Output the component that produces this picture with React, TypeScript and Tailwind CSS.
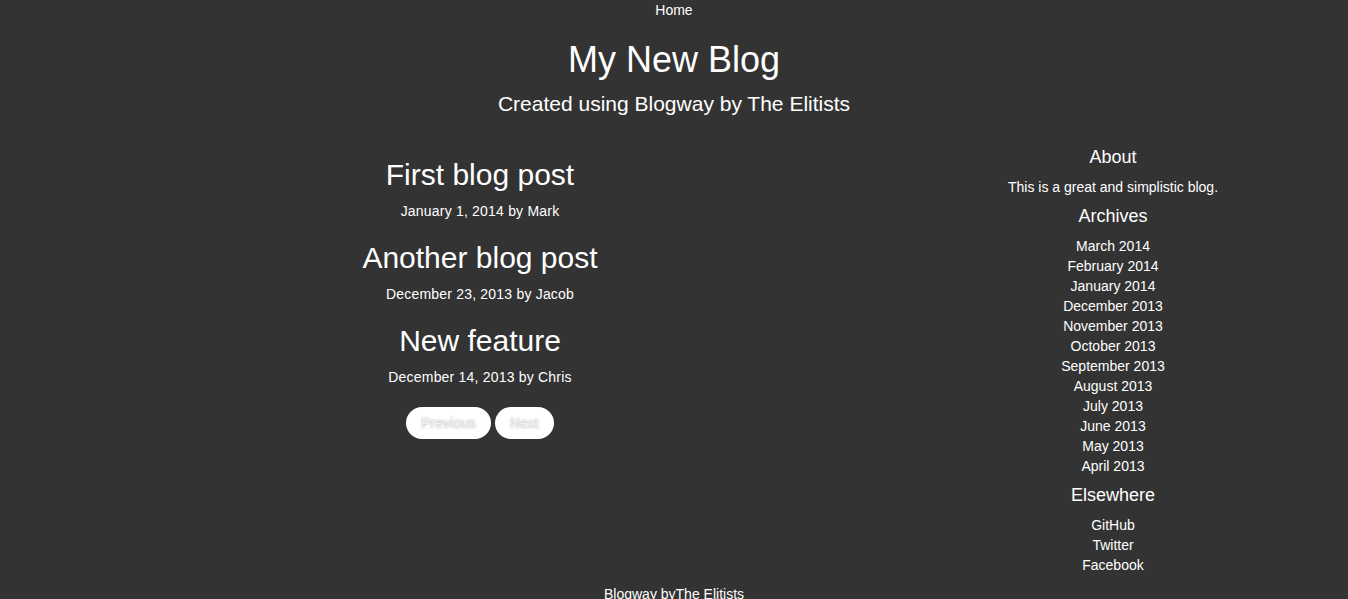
import * as React from "react";

type Post = {
  title: string;
  date: string;
  author: string;
};

const posts: Post[] = [
  { title: "First blog post", date: "January 1, 2014", author: "Mark" },
  { title: "Another blog post", date: "December 23, 2013", author: "Jacob" },
  { title: "New feature", date: "December 14, 2013", author: "Chris" },
];

const archives = [
  "March 2014",
  "February 2014",
  "January 2014",
  "December 2013",
  "November 2013",
  "October 2013",
  "September 2013",
  "August 2013",
  "July 2013",
  "June 2013",
  "May 2013",
  "April 2013",
];

const elsewhere = ["GitHub", "Twitter", "Facebook"];

export default function App() {
  return (
    <div className="min-h-screen bg-[#333333] text-white font-['Liberation_Sans',Arial,sans-serif] text-center">
      {/* Nav */}
      <nav className="text-[14px] leading-[20px]">
        <a href="#">Home</a>
      </nav>

      {/* Header */}
      <header>
        <h1 className="mt-[18px] text-[36px] leading-[44px] font-normal">
          My New Blog
        </h1>
        <h2 className="mt-[10px] text-[21px] leading-[24px] font-normal">
          Created using Blogway by The Elitists
        </h2>
      </header>

      <div className="mt-[29px] flex">
        {/* Posts */}
        <main className="w-[960px] pt-[12px]">
          {posts.map((post, i) => (
            <article key={post.title} className={i > 0 ? "mt-[19px]" : ""}>
              <h3 className="text-[30px] leading-[36px] font-normal">
                <a href="#">{post.title}</a>
              </h3>
              <p className="mt-[8px] text-[14px] leading-[20px] tracking-[0.2px]">
                {post.date} by {post.author}
              </p>
            </article>
          ))}

          <div className="mt-[20px] flex justify-center gap-[4px]">
            <button className="h-[32px] w-[85px] rounded-full bg-white text-[14px] text-[#f4f4f4] [text-shadow:0_0_2px_#9a9a9a]">
              Previous
            </button>
            <button className="h-[32px] w-[59px] rounded-full bg-white text-[14px] text-[#f4f4f4] [text-shadow:0_0_2px_#9a9a9a]">
              Next
            </button>
          </div>
        </main>

        {/* Sidebar */}
        <aside className="w-[306px] text-[14px] leading-[20px]">
          <h4 className="text-[18px] leading-[24px] font-normal">About</h4>
          <p className="mt-[8px]">This is a great and simplistic blog.</p>

          <h4 className="mt-[7px] text-[18px] leading-[24px] font-normal">
            Archives
          </h4>
          <ul className="mt-[8px]">
            {archives.map((a) => (
              <li key={a}>
                <a href="#">{a}</a>
              </li>
            ))}
          </ul>

          <h4 className="mt-[7px] text-[18px] leading-[24px] font-normal">
            Elsewhere
          </h4>
          <ul className="mt-[8px]">
            {elsewhere.map((e) => (
              <li key={e}>
                <a href="#">{e}</a>
              </li>
            ))}
          </ul>
        </aside>
      </div>

      {/* Footer */}
      <footer className="mt-[9px] text-[14px] leading-[20px]">
        Blogway by<a href="#">The Elitists</a>
      </footer>
    </div>
  );
}
